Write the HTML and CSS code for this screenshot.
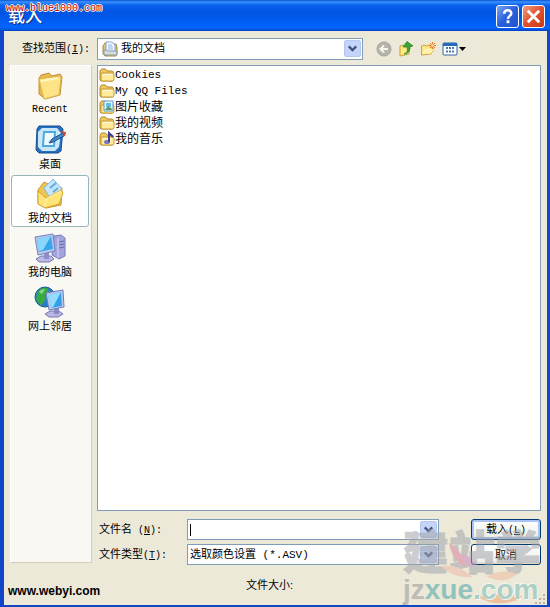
FILE: index.html
```html
<!DOCTYPE html>
<html lang="zh-CN">
<head>
  <meta charset="UTF-8" />
  <meta name="viewport" content="width=device-width, initial-scale=1.0"/>
  <title>载入</title>
  <link rel="stylesheet" href="styles.css">
</head>
<body>

  <!-- shared icons -->
  <svg class="sprite" aria-hidden="true">
    <symbol id="folder" viewBox="0 0 16 16">
      <path d="M1 13V4l1.500-2h4L8 4h5.500l1 1.500V13l-1 1H2z" fill="#f0c95c" stroke="#b08a30"/>
      <path d="M2 13.500V7l1-1h11l1 1v6l-1 1H3z" fill="#ffeb9c" stroke="#c39a36"/>
      <path d="M3.500 7.500H13" stroke="#fffbe0"/>
    </symbol>
    <symbol id="chevron" viewBox="0 0 16 16">
      <rect x=".5" y=".5" width="15" height="15" rx="2" fill="#c5d5fa" stroke="#b4c7f0"/>
      <path d="m4.500 6 3.500 3.500L11.500 6" fill="none" stroke="#405580" stroke-width="2.200"/>
    </symbol>
  </svg>

  <div class="window">
    <header class="titlebar">
      <h1>载入</h1>
      <span class="stamp">www.blue1000.com</span>
      <button class="caption-btn help" type="button" aria-label="Help">
        <svg viewBox="0 0 22 22"><path d="M7.500 8c0-5 7.500-4.500 7.500-.5 0 3-3.500 2.800-3.500 6" fill="none" stroke="#fff" stroke-width="2.600"/><rect x="10" y="15" width="3" height="3" fill="#fff"/></svg>
      </button>
      <button class="caption-btn close" type="button" aria-label="Close">
        <svg viewBox="0 0 22 22"><path d="m5 5 12 12m0-12-12 12" stroke="#fff" stroke-width="3"/></svg>
      </button>
    </header>

    <form class="content">
      <div class="lookup">
        <label for="lookIn">查找范围<span class="key">(<u>I</u>):</span></label>
        <div class="combo look-in">
          <svg class="combo-icon" viewBox="0 0 16 16">
            <path d="M1 13V5l2-3h2v12H2zM12 3h2l1 3v7l-1 2H3l-1-1z" fill="#e3c56e" stroke="#a38a4c"/>
            <path d="M4 1h6l3 3v8H4z" fill="#f5f9ff" stroke="#86a7d1"/>
            <path d="M6 4h4M6 6h5M6 8h5" stroke="#8db3df"/>
            <path d="M2 9h3l1 1h9v4H2z" fill="#d5dce0" stroke="#8e9ba5"/>
          </svg>
          <select id="lookIn"><option>我的文档</option></select>
          <svg class="arrow"><use href="#chevron"/></svg>
        </div>
        <div class="tools">
          <button type="button" aria-label="Back">
            <svg width="16" height="16" viewBox="0 0 16 16"><circle cx="8" cy="8" r="7" fill="#b5b5ae" stroke="#a3a39c"/><path d="M12 8H5m3-3.500L4.500 8 8 11.500" fill="none" stroke="#f5f5ee" stroke-width="2"/></svg>
          </button>
          <button type="button" aria-label="Up one level">
            <svg width="16" height="16" viewBox="0 0 16 16"><path d="M2 5l4-1 1 1 5-1-1 9-9 2z" fill="#ffe982" stroke="#c7a237"/><path d="M6 13c3-1 4-3 3-7H5l4-5.500L15 5l-3 .5c0 5-2 7-6 7.500z" fill="#3aa735" stroke="#217a20" stroke-width=".7"/></svg>
          </button>
          <button type="button" aria-label="New folder">
            <svg width="16" height="16" viewBox="0 0 16 16"><path d="M1.500 5 5 4l1 1 5-1v3l3 .5-3 5.500-9.500 1z" fill="#ffe789" stroke="#d2a33b"/><path d="m2 13 2.500-5L14 7.500l-3 5z" fill="#fff2ad"/><path d="M12.500 1v7M9 4.500h7M10 2l5 5m0-5-5 5" stroke="#e47830"/><circle cx="12.500" cy="4.500" r="1.300" fill="#ffe7a0"/></svg>
          </button>
          <button type="button" aria-label="View menu">
            <svg width="24" height="16" viewBox="0 0 24 16"><rect x="1" y="2" width="14" height="12" rx="1" fill="#fff" stroke="#2e65ac"/><path d="M1 3.500h14" stroke="#2669bd" stroke-width="3"/><path d="M4 7h2m1 0h2m1 0h2M4 10.500h2m1 0h2m1 0h2" stroke="#467da8" stroke-width="2"/><path d="M17 6h7l-3.500 4z" fill="#000"/></svg>
          </button>
        </div>
      </div>

      <nav class="places">
        <a href="#recent">
          <svg viewBox="0 0 32 32"><path d="m5 8 2-3 8-2 3 3 8-2 2 3-2 18-15 4-6-5z" fill="#e8b94e" stroke="#c39135"/><path d="m5 9 20-3 2 2-2 17-15 4z" fill="#ffe487" stroke="#dfb44d"/><path d="m7 11 17-3" stroke="#fff6c6" stroke-width="2"/></svg>
          <span class="latin">Recent</span>
        </a>
        <a href="#desktop">
          <svg viewBox="0 0 32 32"><path d="M5 2h21l3 3-2 22-3 2H5l-3-3L3 5z" fill="#2870bb" stroke="#164e94"/><path d="M8 4h15l4 5-2 14-4 4H8l-4-4V8z" fill="#c9e6fb"/><path d="M10 8h11l-1 14H9z" fill="#eefaff" stroke="#4fa9da" stroke-width="2"/><path d="m15 19 3-4 11-6 1 3-11 6z" fill="#438bc7" stroke="#194d8c"/><path d="m28 8 3 1-1 3" fill="none" stroke="#d94a3d" stroke-width="2"/></svg>
          <span>桌面</span>
        </a>
        <a href="#documents" class="active">
          <svg viewBox="0 0 32 32"><path d="m4 12 6-8 4 2 14 4-1 17-15 3-8-4z" fill="#edc453" stroke="#ca952b"/><path d="m10 10 9-9 9 10-10 12z" fill="#c5e7fb" stroke="#7bbbe0"/><path d="m16 10 6-5m-3 9 5-4" stroke="#62ace1" stroke-width="2"/><path d="m4 13 8 7 15-8 2 3-4 11-14 4-7-4z" fill="#ffe477" stroke="#d4a634"/><path d="m10 28 3-8 14-7" fill="none" stroke="#fff4b2"/></svg>
          <span>我的文档</span>
        </a>
        <a href="#computer">
          <svg viewBox="0 0 32 32"><path d="m20 4 7-1 4 3v18l-6 3-7-4z" fill="#a4a5dd" stroke="#777bb8"/><path d="M24 6v20" stroke="#d6d7f6"/><path d="m25 10 5-1m-5 4 5-1m-5 4 5-1" stroke="#656aae"/><path d="M7 24h10l3 3-5 3H5l-3-3z" fill="#b9b9e5" stroke="#7879b5"/><path d="M10 20h5v7h-5z" fill="#8d8ec7"/><path d="m1 5 18-3 2 17-17 4z" fill="#bfc6ed" stroke="#7283bd"/><path d="m3 7 14-3 2 13-14 3z" fill="#36a7ed"/><path d="m3 7 14-3-8 14-4 1z" fill="#8bd7fc"/></svg>
          <span>我的电脑</span>
        </a>
        <a href="#network">
          <svg viewBox="0 0 32 32"><circle cx="11" cy="11" r="10" fill="#287bd0" stroke="#165c96"/><path d="M3 7c4-7 10-5 10-5l2 4-4 3 1 4-5 7-5-6z" fill="#39a847"/><path d="M5 6c2-3 5-3 6-3L8 8z" fill="#8bd678"/><path d="M16 25h9l4 3-5 3h-9l-4-3z" fill="#b8b7e1" stroke="#7879b5"/><path d="M20 22h5v6h-5z" fill="#8988c4"/><path d="m12 7 17-3 1 17-15 3z" fill="#bfcaf0" stroke="#6d7fb8"/><path d="m14 9 13-3 1 14-11 2z" fill="#35a0e8"/><path d="m14 9 13-3-8 15-2 1z" fill="#94dbfd"/></svg>
          <span>网上邻居</span>
        </a>
      </nav>

      <main class="main">
        <ul class="files">
          <li class="latin"><svg><use href="#folder"/></svg>Cookies</li>
          <li class="latin"><svg><use href="#folder"/></svg>My QQ Files</li>
          <li><svg viewBox="0 0 16 16"><use href="#folder"/><path d="M5 2h9v10H5z" fill="#e6f7ff" stroke="#5a9bbd"/><path d="M7 4h5v4H7z" fill="#60bde8"/><path d="m6 11 3-4 2 2 1-1 1 3z" fill="#5c9962"/></svg>图片收藏</li>
          <li><svg><use href="#folder"/></svg>我的视频</li>
          <li><svg viewBox="0 0 16 16"><use href="#folder"/><ellipse cx="8" cy="11" rx="3" ry="2" fill="#7877c4"/><path d="M10 11V2l4 4" fill="none" stroke="#3e3d98" stroke-width="2"/></svg>我的音乐</li>
        </ul>

        <div class="fields">
          <label for="fileName">文件名<span class="key"> (<u>N</u>):</span></label>
          <div class="combo">
            <input id="fileName" type="text">
            <span class="caret"></span>
            <svg class="arrow"><use href="#chevron"/></svg>
          </div>
          <button class="btn default" type="submit">载入<span class="key">(<u>L</u>)</span></button>

          <label for="fileType">文件类型<span class="key">(<u>T</u>):</span></label>
          <div class="combo">
            <select id="fileType"><option>选取颜色设置 (*.ASV)</option></select>
            <svg class="arrow"><use href="#chevron"/></svg>
          </div>
          <button class="btn" type="button">取消</button>
        </div>
      </main>
    </form>

    <footer class="status">
      <strong>www.webyi.com</strong>
      <span>文件大小:</span>
      <svg class="grip" viewBox="0 0 12 12"><path d="M9 1h2v2H9zM5 5h2v2H5zm4 0h2v2H9zM1 9h2v2H1zm4 0h2v2H5zm4 0h2v2H9z" fill="#b8b4a2"/></svg>
    </footer>

    <div class="watermark">
      <svg class="petals" viewBox="0 0 140 80" aria-hidden="true">
        <path d="M46 16c10 6 15 14 16 24-9-5-14-13-16-24z" fill="#d9829b"/>
        <path d="M58 27c8 1 13 5 14 12-8 1-12-3-14-12z" fill="#c883ba"/>
        <path d="M38 39c12-2 22 2 31 11-12 1-22-2-31-11z" fill="#edb8a8"/>
        <path d="M84 50c10-6 20-7 30-3-8 7-18 8-30 3z" fill="#efb9a0"/>
        <path d="M76 70c14-3 30-3 44-1-10 9-33 10-44 1z" fill="#efa070"/>
      </svg>
      <div class="mark-name">建站学</div>
      <div class="mark-site">jz<b>xue</b><i>.com</i></div>
    </div>
  </div>

</body>
</html>
```

FILE: styles.css
```css
* {
  margin: 0;
  padding: 0;
  box-sizing: border-box;
}

body {
  font-family: "Liberation Sans", "Noto Sans CJK SC", sans-serif;
  font-size: 11px;
  line-height: 16px;
  color: #000;
}

button, input, select {
  font: inherit;
  color: inherit;
}

.sprite {
  position: absolute;
  width: 0;
  height: 0;
}

.window {
  position: relative;
  display: flex;
  flex-direction: column;
  min-height: 100vh;
  background: #ece9d8;
  border: solid #1245c8;
  border-width: 0 3px 2px 4px;
}

/* title bar */
.titlebar {
  position: relative;
  display: flex;
  align-items: center;
  gap: 3px;
  height: 31px;
  margin: 0 -3px 0 -4px;
  padding: 2px 5px 0 8px;
  background: linear-gradient(#0a4fd0 0, #3a93ff 6%, #0a62ee 16%, #0054e3 40%, #005cf2 70%, #0266ff 90%, #0241c4 100%);
}

.titlebar h1 {
  flex: 1;
  font-size: 17px;
  font-weight: 500;
  line-height: 24px;
  color: #fff;
  text-shadow: 1px 1px #0b2f85;
}

.stamp {
  position: absolute;
  left: 6px;
  top: 1px;
  font-family: "Liberation Mono", monospace;
  font-size: 10px;
  color: #c00000;
  text-shadow: 1px 0 #fff, -1px 0 #fff, 0 1px #fff, 0 -1px #fff;
}

.caption-btn {
  width: 23px;
  height: 23px;
  border: 1px solid #fff;
  border-radius: 3px;
  background: linear-gradient(135deg, #7ba4f5, #2a5fdc 50%, #2255cc);
}

.caption-btn svg {
  display: block;
  width: 21px;
  height: 21px;
}

.caption-btn.close {
  background: linear-gradient(135deg, #f0a085, #e0502c 50%, #c93a12);
}

/* body of the dialog */
.content {
  flex: 1;
  display: grid;
  grid-template-columns: 82px 1fr;
  grid-template-rows: auto 1fr;
  gap: 5px;
  padding: 7px 6px 0;
}

.lookup {
  grid-column: 1 / 3;
  display: flex;
  align-items: center;
}

.lookup label {
  width: 87px;
  padding-left: 12px;
  white-space: nowrap;
}

.key {
  font-family: "Liberation Mono", monospace;
  font-size: 10px;
}

.combo {
  position: relative;
  display: flex;
  height: 21px;
  background: #fff;
  border: 1px solid #7f9db9;
}

.combo input,
.combo select {
  flex: 1;
  min-width: 0;
  padding: 0 20px 0 2px;
  border: 0;
  outline: 0;
  background: none;
  appearance: none;
}

.combo select {
  font-family: "Liberation Mono", "Noto Sans CJK SC", monospace;
}

.arrow {
  position: absolute;
  top: 1px;
  right: 1px;
  width: 17px;
  height: 17px;
  pointer-events: none;
}

.caret {
  position: absolute;
  left: 2px;
  top: 4px;
  width: 1px;
  height: 12px;
  background: #000;
}

.look-in {
  flex: 1;
  height: 22px;
}

.look-in select {
  padding-left: 23px;
}

.combo-icon {
  position: absolute;
  left: 4px;
  top: 2px;
  width: 16px;
  height: 16px;
}

.tools {
  display: flex;
  gap: 6px;
  padding: 0 75px 0 13px;
}

.tools button {
  border: 0;
  background: none;
}

.tools svg {
  display: block;
}

/* shortcuts on the left */
.places {
  display: flex;
  flex-direction: column;
  gap: 2px;
  margin-bottom: 2px;
  padding: 1px 2px 1px 0;
  background: #f9f8f3;
  border: 1px solid #dedac8;
  border-color: #fff #d2cebb #d2cebb #fff;
}

.places a {
  display: flex;
  flex-direction: column;
  align-items: center;
  height: 52px;
  padding-top: 2px;
  border: 1px solid transparent;
  border-radius: 3px;
  color: #000;
  text-decoration: none;
}

.places a.active {
  background: #fff;
  border-color: #98b5bd;
}

.places svg {
  width: 32px;
  height: 32px;
}

.latin {
  font-family: "Liberation Mono", monospace;
}

.places .latin {
  font-size: 10px;
}

/* file list and fields */
.main {
  display: flex;
  flex-direction: column;
  gap: 8px;
  min-width: 0;
}

.files {
  flex: 1;
  padding: 1px;
  list-style: none;
  background: #fff;
  border: 1px solid #7f9db9;
}

.files li {
  display: flex;
  align-items: center;
  height: 16px;
  font-size: 12px;
}

.files .latin {
  font-size: 11px;
}

.files svg {
  width: 16px;
  height: 16px;
}

.fields {
  display: grid;
  grid-template-columns: 90px 1fr 70px;
  align-items: center;
  row-gap: 4px;
}

.fields label {
  padding-left: 2px;
}

.fields .combo {
  margin-right: 32px;
}

.btn {
  height: 21px;
  border: 1px solid #003c74;
  border-radius: 3px;
  background: linear-gradient(#fff, #f0f0ea 85%, #d8d0c4);
}

.btn.default {
  box-shadow: inset 0 0 0 2px #a9c4f2;
}

/* bottom line */
.status {
  display: grid;
  grid-template-columns: 238px 1fr 12px;
  align-items: center;
  height: 40px;
  padding: 0 1px 0 4px;
}

.status strong {
  padding-top: 12px;
  font-size: 12px;
}

.grip {
  align-self: end;
  width: 12px;
  height: 12px;
}

/* translucent logo over the corner */
.watermark {
  position: absolute;
  right: 4px;
  bottom: 0;
  width: 140px;
  height: 78px;
  opacity: .55;
  pointer-events: none;
}

.petals {
  position: absolute;
  inset: 0;
  width: 140px;
  height: 80px;
}

.mark-name {
  font-size: 46px;
  font-weight: 900;
  line-height: 52px;
  color: #a3a5ab;
  -webkit-text-stroke: 1px #a3a5ab;
}

.mark-site {
  position: relative;
  font-size: 28px;
  font-weight: bold;
  line-height: 22px;
  color: #999;
}

.mark-site b {
  color: #4aa3a8;
}

.mark-site i {
  font-style: normal;
  color: #78bcb8;
  text-shadow: 1px 1px #fff, -1px -1px #fff;
}
```
